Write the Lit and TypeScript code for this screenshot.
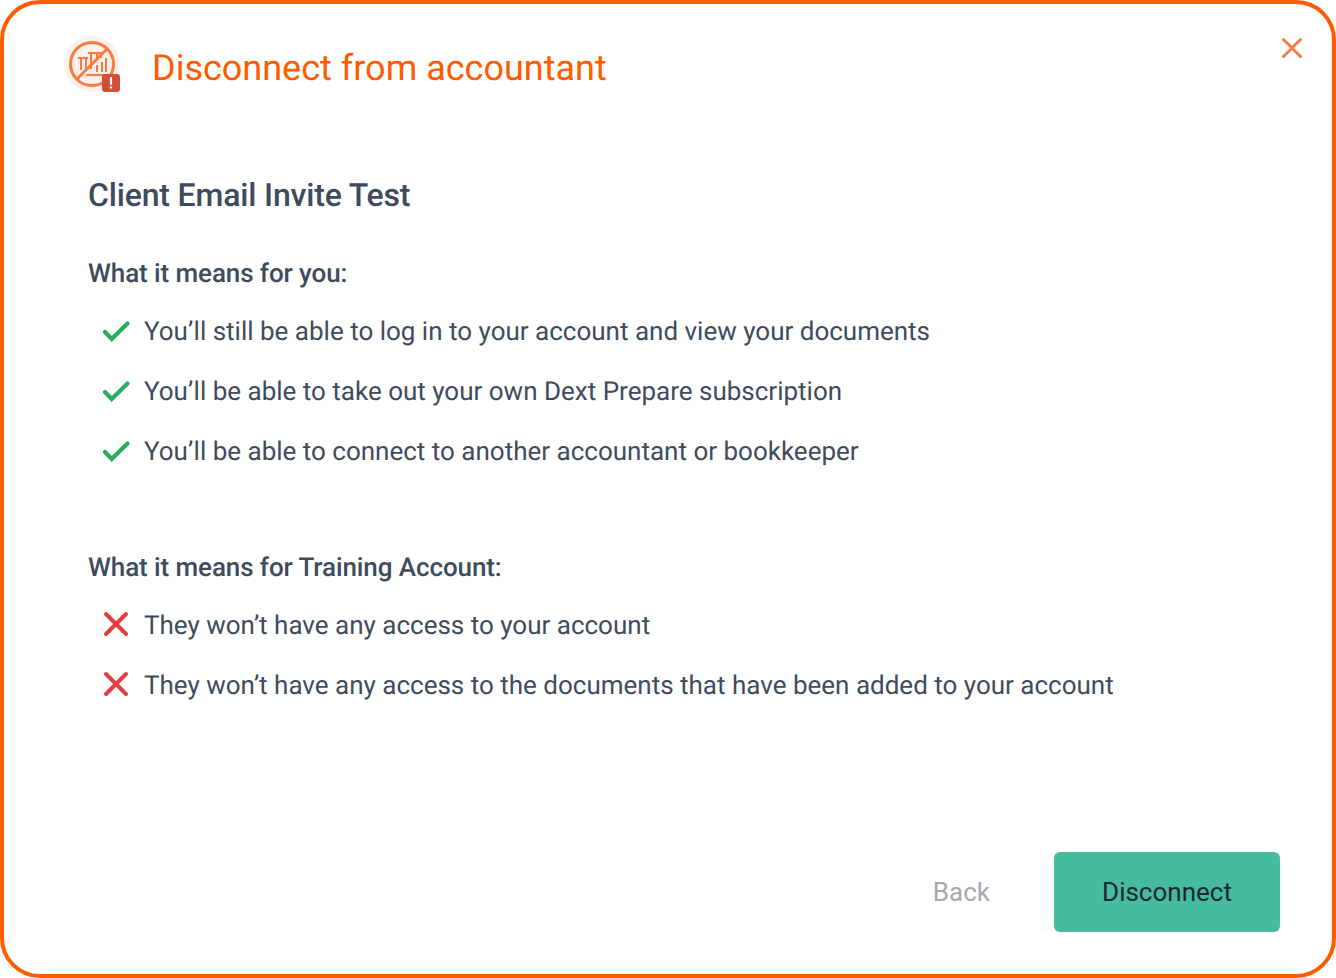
import { LitElement, html, css } from "lit";
import { customElement } from "lit/decorators.js";

const check = html`<svg class="ico" width="32" height="32" viewBox="0 0 32 32" fill="none"><path d="M5 16 L11.7 23 L27.5 7.5" stroke="#27ae60" stroke-width="4.2" stroke-linecap="round" stroke-linejoin="miter"/></svg>`;
const cross = html`<svg class="ico" width="32" height="32" viewBox="0 0 32 32" fill="none"><path d="M6 4 L26 24 M26 4 L6 24" stroke="#e53e3e" stroke-width="4" stroke-linecap="round"/></svg>`;

@customElement("app-root")
export class AppRoot extends LitElement {
  static styles = css`
    :host { display: block; width: 1336px; height: 978px; font-family: Roboto, "Liberation Sans", sans-serif; color: #3e4b5e; text-rendering: geometricPrecision; }
    .card { box-sizing: border-box; width: 1336px; height: 978px; border: 4px solid #ff5c00; border-radius: 40px; background: #fff; display: flex; flex-direction: column; position: relative; }
    .header { display: flex; align-items: center; gap: 28px; padding: 28px 0 0 56px; height: 64px; }
    .title { font-size: 36px; color: #ff5c00; font-weight: 400; line-height: 64px; margin-top: 8px; }
    .close { position: absolute; top: 30px; right: 26px; width: 28px; height: 28px; display: block; }
    .content { padding: 0 0 0 84px; display: flex; flex-direction: column; flex: 1; }
    h2 { margin: 77px 0 0; font-size: 32px; line-height: 44px; font-weight: 500; color: #3e4b5e; letter-spacing: -0.17px; }
    h3 { margin: 35px 0 0; font-size: 26px; line-height: 44px; font-weight: 500; color: #3e4b5e; letter-spacing: -0.09px; }
    h3.second { margin-top: 64px; }
    ul { list-style: none; margin: 6px 0 0; padding: 0; display: flex; flex-direction: column; }
    li { display: flex; align-items: center; height: 60px; font-size: 26px; color: #3e4b5e; }
    .ico { margin: 0 12px 0 12px; flex: none; }
    .footer { margin-top: auto; display: flex; justify-content: flex-end; align-items: center; gap: 48px; padding: 0 52px 42px 0; }
    button { font: inherit; font-size: 26px; border: none; cursor: pointer; padding-bottom: 2px; }
    .back { background: none; color: #a4a9b1; padding-left: 16px; padding-right: 16px; height: 80px; }
    .primary { background: #46bb9e; color: #1c2733; width: 226px; height: 80px; border-radius: 6px; }
  `;

  render() {
    return html`<div class="card">
      <div class="header">
        <svg width="64" height="64" viewBox="0 0 64 64" fill="none">
          <circle cx="32" cy="32" r="28" fill="#fff0ea"/>
          <g stroke="#fa7b41" fill="none">
            <circle cx="32" cy="32" r="21.5" stroke-width="3"/>
            <path d="M17 47 L47 17" stroke-width="3"/>
            <path d="M18 26H28M21 26V38M26 26V38M28 21H44M31 21V37M37 21V26M41 21V26M37 33V40M42 30V40M46 26V40M26 43H46" stroke-width="2"/>
          </g>
          <rect x="42" y="42" width="18" height="18" rx="3" fill="#cf4f37"/>
          <path d="M51 46V52" stroke="#fff" stroke-width="2.2" stroke-linecap="round"/>
          <circle cx="51" cy="55.4" r="1.2" fill="#fff"/>
        </svg>
        <div class="title">Disconnect from accountant</div>
      </div>
      <svg class="close" viewBox="0 0 28 28" fill="none"><path d="M5.5 5.5 L22.5 22.5 M22.5 5.5 L5.5 22.5" stroke="#fc7a45" stroke-width="3" stroke-linecap="round"/></svg>
      <div class="content">
        <h2>Client Email Invite Test</h2>
        <h3>What it means for you:</h3>
        <ul>
          <li>${check}You’ll still be able to log in to your account and view your documents</li>
          <li>${check}You’ll be able to take out your own Dext Prepare subscription</li>
          <li>${check}You’ll be able to connect to another accountant or bookkeeper</li>
        </ul>
        <h3 class="second">What it means for Training Account:</h3>
        <ul>
          <li>${cross}They won’t have any access to your account</li>
          <li>${cross}They won’t have any access to the documents that have been added to your account</li>
        </ul>
        <div class="footer">
          <button class="back">Back</button>
          <button class="primary">Disconnect</button>
        </div>
      </div>
    </div>`;
  }
}
